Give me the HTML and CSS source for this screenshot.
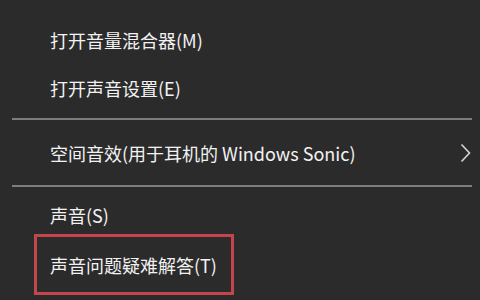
FILE: index.html
```html
<!DOCTYPE html>
<html lang="zh-CN">
<head>
<meta charset="utf-8">
<link rel="stylesheet" href="styles.css">
</head>
<body>
<div class="menu">
  <div class="item first">打开音量混合器(M)</div>
  <div class="item">打开声音设置(E)</div>
  <div class="sep"></div>
  <div class="item sub">
    <span>空间音效(用于耳机的 Windows Sonic)</span>
    <svg class="chev" width="11" height="20" viewBox="0 0 11 20"><path d="M1.5 1.5 L9.5 10 L1.5 18.5" fill="none" stroke="#cfcfcf" stroke-width="1.7"/></svg>
  </div>
  <div class="sep sep2"></div>
  <div class="item snd">声音(S)</div>
  <div class="item hl">声音问题疑难解答(T)</div>
</div>
</body>
</html>
```
FILE: styles.css
```css
html, body {
  margin: 0;
  padding: 0;
  background: #2b2b2b;
}
.menu {
  width: 480px;
  height: 300px;
  background: #2b2b2b;
  color: #f2f2f2;
  font-family: "Noto Sans CJK SC", "Noto Sans", sans-serif;
  font-size: 18px;
  display: flex;
  flex-direction: column;
  padding-top: 16px;
  box-sizing: border-box;
  overflow: hidden;
}
.item {
  height: 48px;
  flex-shrink: 0;
  display: flex;
  align-items: center;
  padding-left: 50px;
  padding-right: 9px;
  box-sizing: border-box;
}
.sub {
  height: 50px;
  justify-content: space-between;
  margin-top: 8px;
  margin-bottom: 7px;
}
.sep {
  height: 2px;
  flex-shrink: 0;
  margin: 6px 8px 0 12px;
  background: #7d7d7d;
}
.sep2 {
  margin-top: 0;
}
.snd {
  margin-top: 4px;
}
.hl {
  margin-top: -5px;
  margin-left: 34px;
  padding-left: 13px;
  width: 200px;
  height: 61px;
  border: 3px solid #c4464c;
}
```
